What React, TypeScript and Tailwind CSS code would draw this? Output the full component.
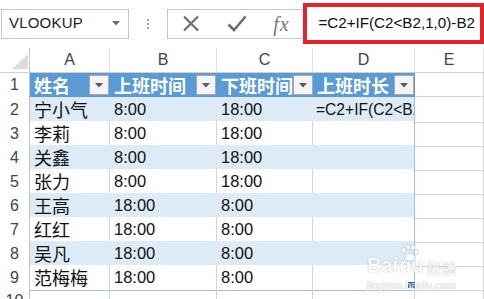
import React from 'react';

const COLS = 'grid grid-cols-[30px_80px_107px_96px_102px_69px]';
const LATIN = "font-['Liberation_Sans','Noto_Sans_CJK_SC',sans-serif]";

const rows = [
  ['宁小气', '8:00', '18:00', '=C2+IF(C2<B2,1,0)-B2'],
  ['李莉', '8:00', '18:00', ''],
  ['关鑫', '8:00', '18:00', ''],
  ['张力', '8:00', '18:00', ''],
  ['王高', '18:00', '8:00', ''],
  ['红红', '18:00', '8:00', ''],
  ['吴凡', '18:00', '8:00', ''],
  ['范梅梅', '18:00', '8:00', ''],
];

function FilterButton() {
  return (
    <div className="w-[20px] h-[20px] shrink-0 bg-[#f4f4f4] border border-[#a9a9a9] flex items-center justify-center">
      <svg width="8" height="5" viewBox="0 0 8 5">
        <path d="M0 0h8L4 4.5z" fill="#595959" />
      </svg>
    </div>
  );
}

function Toolbar() {
  return (
    <div className="h-[47px] flex items-center">
      <div className="ml-[1px] w-[128px] h-[30px] border border-[#c6c6c6] flex items-center justify-between pl-[7px] pr-[8px]">
        <span className={`${LATIN} text-[15px] text-[#222] tracking-[0.2px]`}>VLOOKUP</span>
        <svg width="8" height="5" viewBox="0 0 8 5">
          <path d="M0 0h8L4 4.5z" fill="#6b6b6b" />
        </svg>
      </div>
      <div className="w-[38px] flex flex-col items-center gap-[2px]">
        <span className="w-[2px] h-[2px] bg-[#a0a0a0]" />
        <span className="w-[2px] h-[2px] bg-[#a0a0a0]" />
        <span className="w-[2px] h-[2px] bg-[#a0a0a0]" />
      </div>
      <div className="w-[137px] h-[30px] border border-[#c6c6c6] border-r-0 flex items-center">
        <div className="w-[46px] flex justify-center pl-[1px]">
          <svg width="18" height="17" viewBox="0 0 18 17">
            <path d="M2 1.5l14 14M16 1.5l-14 14" stroke="#6e6e6e" strokeWidth="2.2" />
          </svg>
        </div>
        <div className="w-[46px] flex justify-center">
          <svg width="20" height="17" viewBox="0 0 20 17">
            <path d="M1.5 9.5l5.5 5.5L18.5 1.5" stroke="#6e6e6e" strokeWidth="2.6" fill="none" />
          </svg>
        </div>
        <div className="flex-1 flex justify-center">
          <span className="font-['Liberation_Serif',serif] italic text-[20px] text-[#777] leading-none tracking-[1px]">fx</span>
        </div>
      </div>
      <div className="w-[181px] h-[41px] border-[4px] border-[#e8222b] flex items-center pl-[11px] overflow-hidden">
        <span className={`${LATIN} text-[15.2px] text-[#111] whitespace-nowrap`}>=C2+IF(C2&lt;B2,1,0)-B2</span>
      </div>
    </div>
  );
}

function ColumnHeader() {
  const letters = ['A', 'B', 'C', 'D', 'E'];
  return (
    <div className={`${COLS} h-[25px] border-b border-[#d0d0d0]`}>
      <div className="border-r border-[#c4c4c4] relative">
        <svg className="absolute left-[12px] top-[6px]" width="16" height="15" viewBox="0 0 16 15">
          <path d="M16 0V15H0z" fill="#dcdcdc" />
        </svg>
      </div>
      {letters.map((l) => (
        <div
          key={l}
          className={`${LATIN} border-r border-[#e2e2e2] flex items-center justify-center text-[16px] text-[#444]`}
        >
          {l}
        </div>
      ))}
    </div>
  );
}

function TableHeader() {
  const titles = ['姓名', '上班时间', '下班时间', '上班时长'];
  return (
    <div className={`${COLS} h-[24px]`}>
      <div className={`${LATIN} border-r border-[#c4c4c4] flex items-center justify-center text-[16px] text-[#444]`}>1</div>
      {titles.map((t) => (
        <div key={t} className="bg-[#5b9bd5] flex items-center justify-between pl-[4px] pr-[1px] overflow-hidden">
          <span className="font-['Noto_Sans_CJK_SC',sans-serif] font-bold text-[18px] text-white whitespace-nowrap leading-none">{t}</span>
          <FilterButton />
        </div>
      ))}
      <div className="border-r border-b border-[#d4d4d4]" />
    </div>
  );
}

function DataRow({ n, cells }: { n: number; cells: string[] }) {
  const banded = n % 2 === 0;
  const fill = banded ? 'bg-[#ddebf7]' : 'bg-white';
  const inner = banded ? 'border-r-[#ddebf7]' : 'border-r-[#d4d4d4]';
  return (
    <div className={`${COLS} h-[24px]`}>
      <div className={`${LATIN} border-r border-[#c4c4c4] flex items-center justify-center text-[16px] text-[#444]`}>{n}</div>
      <div className={`${fill} border-r ${inner} border-b border-b-[#9bc2e6] flex items-center pl-[4px]`}>
        <span className="font-['Noto_Sans_CJK_SC',sans-serif] text-[18px] text-[#111] leading-none">{cells[0]}</span>
      </div>
      <div className={`${fill} border-r ${inner} border-b border-b-[#9bc2e6] flex items-center pl-[4px]`}>
        <span className={`${LATIN} text-[16.5px] text-[#111]`}>{cells[1]}</span>
      </div>
      <div className={`${fill} border-r ${inner} border-b border-b-[#9bc2e6] flex items-center pl-[4px]`}>
        <span className={`${LATIN} text-[16.5px] text-[#111]`}>{cells[2]}</span>
      </div>
      <div className={`${fill} border-r border-r-[#9bc2e6] border-b border-b-[#9bc2e6] flex items-center pl-[3px] overflow-hidden`}>
        <span className={`${LATIN} text-[15.6px] text-[#111] whitespace-nowrap`}>{cells[3]}</span>
      </div>
      <div className="border-r border-b border-[#d4d4d4]" />
    </div>
  );
}

function EmptyRow({ n }: { n: number }) {
  return (
    <div className={`${COLS} h-[24px]`}>
      <div className={`${LATIN} border-r border-[#c4c4c4] flex items-center justify-center text-[16px] text-[#444]`}>{n}</div>
      <div className="border-r border-b border-[#d4d4d4]" />
      <div className="border-r border-b border-[#d4d4d4]" />
      <div className="border-r border-b border-[#d4d4d4]" />
      <div className="border-r border-b border-[#d4d4d4]" />
      <div className="border-r border-b border-[#d4d4d4]" />
    </div>
  );
}

export default function App() {
  return (
    <div className="w-[484px] h-[299px] overflow-hidden bg-white relative">
      <Toolbar />
      <div className="mt-[1px]">
        <ColumnHeader />
        <TableHeader />
        {rows.map((r, i) => (
          <DataRow key={i} n={i + 2} cells={r} />
        ))}
        <EmptyRow n={10} />
      </div>

      {/* fill handle */}
      <div className="absolute left-[408px] top-[282px] w-[7px] h-[6px] bg-[#3f5cae]" />

      {/* watermark */}
      <div className="absolute left-[367px] top-[255px] w-[112px] pointer-events-none select-none whitespace-nowrap opacity-75">
        <svg className="absolute left-[32px] top-[-11px]" width="20" height="18" viewBox="0 0 22 20">
          <g fill="white" stroke="#bcbcbc" strokeWidth="0.9">
            <ellipse cx="5" cy="7" rx="2.6" ry="3.2" />
            <ellipse cx="10" cy="3.5" rx="2.6" ry="3.2" />
            <ellipse cx="15.5" cy="4" rx="2.6" ry="3.2" />
            <ellipse cx="19" cy="9" rx="2.4" ry="3" />
            <path d="M6 17c0-4 3-7 6-7s6 3 6 7c0 2-3 2-6 2s-6 0-6-2z" />
          </g>
        </svg>
        <div className="flex items-end">
          <span className="font-['Liberation_Sans',sans-serif] font-bold text-[20px] leading-none text-white [text-shadow:0_0_1px_#a8a8a8,0_0_1px_#a8a8a8]">Bai</span>
          <span className="ml-[1px] font-['Liberation_Sans',sans-serif] font-bold text-[20px] leading-none text-white [text-shadow:0_0_1px_#a8a8a8,0_0_1px_#a8a8a8]">du</span>
          <span className="ml-[3px] font-['Noto_Sans_CJK_SC',sans-serif] text-[15px] leading-none text-white [text-shadow:0_0_1px_#a0a0a0,0_0_1px_#a0a0a0]">经验</span>
        </div>
        <div className="mt-[5px] font-['Liberation_Sans',sans-serif] text-[11px] leading-none text-white [text-shadow:0_0_1px_#a8a8a8,0_0_1px_#a8a8a8]">jingyan.baidu.com</div>
      </div>
    </div>
  );
}
